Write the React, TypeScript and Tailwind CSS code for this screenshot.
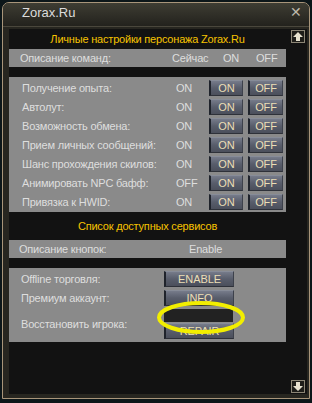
import React from "react";

const font = { fontFamily: '"Liberation Sans", Arial, sans-serif' };

function Btn({ label, w, extra }: { label: string; w: string; extra?: string }) {
  return (
    <div
      className={`${w} ${extra ?? ""} h-[16px] shrink-0 flex items-center justify-center text-[11px] tracking-[-0.1px] leading-none text-[#ecdfb6] border-l-2 border-t border-b border-r border-l-[#1f232b] border-t-[#878c98] border-b-[#2e3139] border-r-[#3d414b] bg-gradient-to-b from-[#767b8a] via-[#585d6b] to-[#4b4f5b]`}
    >
      {label}
    </div>
  );
}

const rows: [string, string][] = [
  ["Получение опыта:", "ON"],
  ["Автолут:", "ON"],
  ["Возможность обмена:", "ON"],
  ["Прием личных сообщений:", "ON"],
  ["Шанс прохождения скилов:", "ON"],
  ["Анимировать NPC бафф:", "OFF"],
  ["Привязка к HWID:", "ON"],
];

function ScrollBtn({ down }: { down?: boolean }) {
  return (
    <div className="w-[14px] h-[13px] border border-[#8c8676] bg-[#1e1d19] flex items-center justify-center">
      <svg width="10" height="9" viewBox="0 0 10 9">
        {down ? (
          <path d="M3 0h4v4h3L5 9 0 4h3z" fill="#e8e2cf" />
        ) : (
          <path d="M3 9h4V5h3L5 0 0 5h3z" fill="#e8e2cf" />
        )}
      </svg>
    </div>
  );
}

export default function App() {
  return (
    <div className="w-[312px] h-[403px] bg-[#0c1619] overflow-hidden pt-[2px] pl-[2px]" style={font}>
      <div className="relative w-[308px] h-[397px] rounded-t-[7px] border border-[#a8957a] bg-[#272620] flex flex-col">
        {/* title bar */}
        <div className="h-[24px] rounded-t-[6px] bg-gradient-to-b from-[#3e3d33] to-[#23221d] flex items-start justify-between pt-[3px] pl-[19px] pr-[7px] border-b border-[#4a473c]">
          <span className="text-[13px] text-[#dcdcdc] leading-[13px]">Zorax.Ru</span>
          <span className="text-[14px] text-[#bdb8aa] leading-[13px]">✕</span>
        </div>
        {/* content */}
        <div className="ml-[6px] mr-[2px] mt-[2px] h-[365px] bg-[#121212] flex text-[11px] tracking-[-0.2px]">
          <div className="w-[277px] flex flex-col">
            <div className="h-[20px] flex items-center justify-center text-[#f7c300]">
              Личные настройки персонажа Zorax.Ru
            </div>
            <div className="h-[18px] bg-[#8a8a8a] flex items-center text-[#dedede]">
              <span className="pl-[11px] w-[163px]">Описание команд:</span>
              <span className="w-[51px]">Сейчас</span>
              <span className="w-[33px]">ON</span>
              <span>OFF</span>
            </div>
            <div className="mt-[10px] bg-[#8a8a8a] pt-[3px] pb-[2px] flex flex-col gap-[3px]">
              {rows.map(([l, s]) => (
                <div key={l} className="h-[16px] flex items-center text-[#dedede]">
                  <span className="pl-[13px] w-[167px] shrink-0">{l}</span>
                  <span className="w-[33px] shrink-0">{s}</span>
                  <Btn label="ON" w="w-[34px]" />
                  <div className="w-[5px] shrink-0" />
                  <Btn label="OFF" w="w-[35px]" />
                </div>
              ))}
            </div>
            <div className="h-[28px] flex items-center justify-center text-[#f7c300]">
              Список доступных сервисов
            </div>
            <div className="h-[18px] bg-[#8a8a8a] flex items-center text-[#dedede]">
              <span className="pl-[10px] w-[180px]">Описание кнопок:</span>
              <span>Enable</span>
            </div>
            <div className="relative mt-[10px] h-[74px] bg-[#8a8a8a] pt-[3px] flex flex-col text-[#dedede]">
              <div className="h-[16px] flex items-center">
                <span className="pl-[12px] w-[155px] shrink-0">Offline торговля:</span>
                <Btn label="ENABLE" w="w-[70px]" />
              </div>
              <div className="mt-[3px] h-[16px] flex items-center">
                <span className="pl-[12px] w-[155px] shrink-0">Премиум аккаунт:</span>
                <Btn label="INFO" w="w-[70px]" />
              </div>
              <div className="mt-[10px] flex items-start">
                <span className="pl-[12px] w-[155px] shrink-0 h-[16px] leading-[16px]">Восстановить игрока:</span>
                <Btn label="REPAIR" w="w-[70px]" extra="mt-[7px]" />
              </div>
              <div className="absolute left-[155px] top-[41px] w-[69px] h-[13px] bg-[#222222]" />
              <svg className="absolute left-[146px] top-[32px]" width="92" height="35" viewBox="0 0 92 35">
                <ellipse cx="46" cy="17.5" rx="42" ry="14.5" fill="none" stroke="#f2ee00" strokeWidth="4" />
              </svg>
            </div>
          </div>
          <div className="flex-1 flex flex-col items-center justify-between pt-[1px] pb-[1px] pl-[3px]">
            <ScrollBtn />
            <ScrollBtn down />
          </div>
        </div>
      </div>
    </div>
  );
}
